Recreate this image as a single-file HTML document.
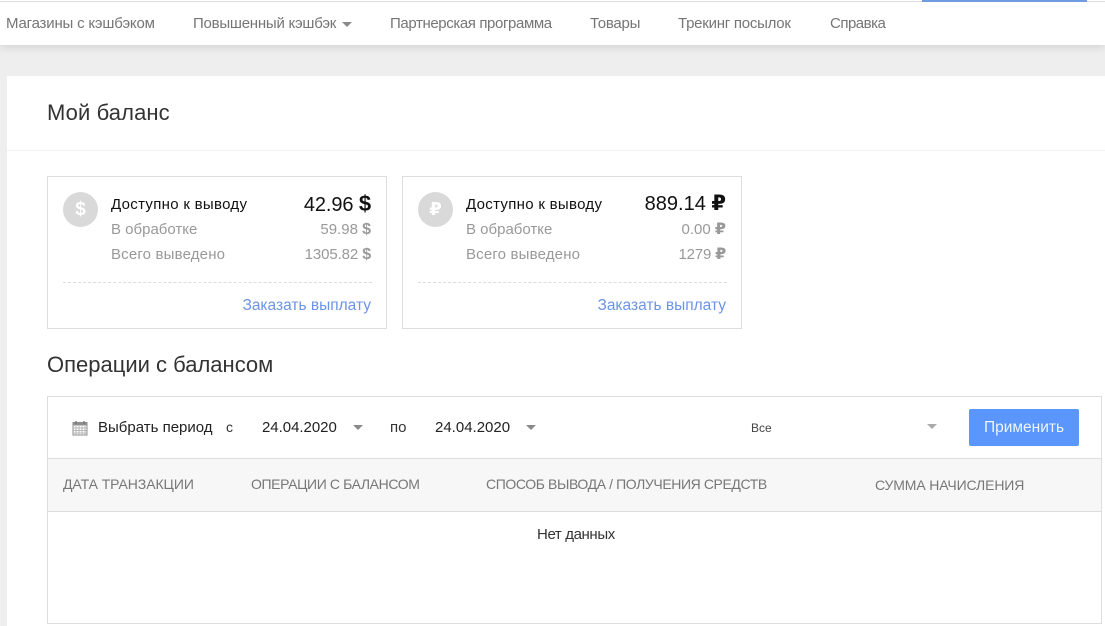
<!DOCTYPE html>
<html lang="ru"><head><meta charset="utf-8"><title>Мой баланс</title>
<style>
html,body{margin:0;padding:0;width:1105px;height:626px;overflow:hidden;background:#eee}
body{position:relative;font-family:"Liberation Sans","DejaVu Sans",sans-serif;font-size:14px}
div,span,a{position:absolute;white-space:nowrap;box-sizing:border-box}
.n{top:15px;color:#757575;font-size:15px;line-height:17px}
.box{border:1px solid #ddd;background:#fff}
.l{font-size:15px;line-height:17px;color:#999}
.r{font-size:15px;line-height:17px;color:#999;right:0;text-align:right}
.h{top:476px;font-size:14px;line-height:17px;color:#777}
.tri{width:0;height:0;border-left:5px solid transparent;border-right:5px solid transparent;border-top:5px solid #8a8a8a}
</style></head><body>
<div style="left:0;top:0;width:1105px;height:45px;background:#fff;box-shadow:0 2px 8px rgba(0,0,0,.12)"></div>
<div style="left:0;top:1px;width:1105px;height:1px;background:#ddd"></div>
<div style="left:922px;top:0;width:165px;height:2px;background:#6f9be0"></div>
<a class="n" style="left:6px;letter-spacing:-.19px">Магазины с кэшбэком</a>
<a class="n" style="left:193px;letter-spacing:-.24px">Повышенный кэшбэк</a>
<div class="tri" style="left:342px;top:22px"></div>
<a class="n" style="left:390px;letter-spacing:-.39px">Партнерская программа</a>
<a class="n" style="left:590px;letter-spacing:-.25px">Товары</a>
<a class="n" style="left:678px;letter-spacing:-.25px">Трекинг посылок</a>
<a class="n" style="left:830px;letter-spacing:-.5px">Справка</a>

<div style="left:7px;top:76px;width:1098px;height:550px;background:#fff"></div>
<div style="left:7px;top:150px;width:1098px;height:1px;background:#f0f0f0"></div>
<div style="left:47px;top:100px;font-size:22px;line-height:26px;color:#333;letter-spacing:.1px">Мой баланс</div>

<div class="box" style="left:47px;top:176px;width:340px;height:153px">
  <svg style="position:absolute;left:15px;top:15px" width="35" height="35" viewBox="0 0 35 35"><circle cx="17.5" cy="17.5" r="17.5" fill="#d9d9d9"/></svg>
  <span style="left:15px;top:15px;width:35px;text-align:center;font-size:19px;line-height:35px;font-weight:700;color:#fff">$</span>
  <span class="l" style="left:63px;top:19px;color:#111;letter-spacing:.3px">Доступно к выводу</span>
  <span class="l" style="left:63px;top:44px">В обработке</span>
  <span class="l" style="left:63px;top:69px;letter-spacing:.17px">Всего выведено</span>
  <span style="right:15px;top:13px;font-size:20px;line-height:27px;color:#111;letter-spacing:-.1px">42.96 <b style="font-size:22px">$</b></span>
  <span class="r" style="right:15px;top:44px">59.98 <b style="font-size:16px">$</b></span>
  <span class="r" style="right:15px;top:69px;letter-spacing:-.1px">1305.82 <b style="font-size:16px">$</b></span>
  <div style="left:15px;top:105px;width:309px;border-top:1px dashed #ddd"></div>
  <a style="right:15px;top:120px;font-size:15.5px;line-height:18px;color:#6d94e4">Заказать выплату</a>
</div>

<div class="box" style="left:402px;top:176px;width:340px;height:153px">
  <svg style="position:absolute;left:15px;top:15px" width="35" height="35" viewBox="0 0 35 35"><circle cx="17.5" cy="17.5" r="17.5" fill="#d9d9d9"/></svg>
  <span style="left:15px;top:15px;width:35px;text-align:center;font-size:18px;line-height:35px;font-weight:700;color:#fff">₽</span>
  <span class="l" style="left:63px;top:19px;color:#111;letter-spacing:.3px">Доступно к выводу</span>
  <span class="l" style="left:63px;top:44px">В обработке</span>
  <span class="l" style="left:63px;top:69px;letter-spacing:.17px">Всего выведено</span>
  <span style="right:15px;top:13px;font-size:20px;line-height:27px;color:#111">889.14 <b style="font-size:21px">₽</b></span>
  <span class="r" style="right:15px;top:44px">0.00 <b style="font-size:16px">₽</b></span>
  <span class="r" style="right:15px;top:69px;letter-spacing:-.2px">1279 <b style="font-size:16px">₽</b></span>
  <div style="left:15px;top:105px;width:309px;border-top:1px dashed #ddd"></div>
  <a style="right:15px;top:120px;font-size:15.5px;line-height:18px;color:#6d94e4">Заказать выплату</a>
</div>

<div style="left:47px;top:352px;font-size:22px;line-height:26px;color:#333">Операции с балансом</div>

<div class="box" style="left:47px;top:396px;width:1055px;height:228px"></div>
<div style="left:48px;top:458px;width:1053px;height:54px;background:#f7f7f7;border-top:1px solid #ddd;border-bottom:1px solid #ddd"></div>

<svg style="position:absolute;left:72px;top:420px" width="16" height="16" viewBox="0 0 16 16"><rect x="1" y="2.5" width="14" height="12.5" fill="#fff" stroke="#8f8f8f"/><rect x="1" y="2.5" width="14" height="3" fill="#8f8f8f"/><path d="M1 8h14M1 10.5h14M1 13h14M4 6v9M7 6v9M10 6v9M13 6v9" stroke="#a8a8a8" stroke-width=".8"/><path d="M4 1v3M12 1v3" stroke="#777" stroke-width="1.4"/></svg>
<span style="left:98px;top:419px;font-size:15px;line-height:17px;color:#222">Выбрать период</span>
<span style="left:226px;top:419px;font-size:14px;line-height:17px;color:#333">с</span>
<span style="left:262px;top:419px;font-size:15px;line-height:17px;color:#222;letter-spacing:-.03px">24.04.2020</span>
<div class="tri" style="left:353px;top:425px"></div>
<span style="left:390px;top:419px;font-size:15px;line-height:17px;color:#333">по</span>
<span style="left:435px;top:419px;font-size:15px;line-height:17px;color:#222">24.04.2020</span>
<div class="tri" style="left:526px;top:425px"></div>
<span style="left:751px;top:421px;font-size:12px;line-height:15px;color:#444">Все</span>
<div class="tri" style="left:927px;top:424px;border-top-color:#aaa"></div>
<a style="left:969px;top:409px;width:110px;height:37px;background:#5a96fb;border-radius:2px;color:#eef4ff;font-size:15.5px;line-height:37px;text-align:center">Применить</a>

<span class="h" style="left:63px;letter-spacing:-.07px">ДАТА ТРАНЗАКЦИИ</span>
<span class="h" style="left:251px;letter-spacing:-.39px">ОПЕРАЦИИ С БАЛАНСОМ</span>
<span class="h" style="left:486px;letter-spacing:-.4px">СПОСОБ ВЫВОДА / ПОЛУЧЕНИЯ СРЕДСТВ</span>
<span class="h" style="left:875px;top:477px;letter-spacing:-.13px">СУММА НАЧИСЛЕНИЯ</span>
<span style="left:537px;top:526px;font-size:15px;line-height:17px;color:#333;letter-spacing:-.38px">Нет данных</span>
</body></html>
